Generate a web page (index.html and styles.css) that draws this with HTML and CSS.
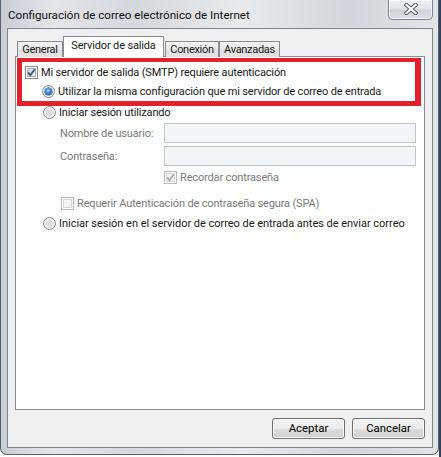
FILE: index.html
```html
<!DOCTYPE html>
<html lang="es">
<head>
<meta charset="utf-8">
<title>Configuración de correo electrónico de Internet</title>
<link rel="stylesheet" href="styles.css">
</head>
<body>
<div class="window">
  <div class="titlebar">
    <span class="title">Configuración de correo electrónico de Internet</span>
    <div class="close">
      <svg width="14" height="12" viewBox="0 0 14 12"><path d="M2.5 2 L11.5 10 M11.5 2 L2.5 10" stroke="#5b6068" stroke-width="4.2" stroke-linecap="square" fill="none"/><path d="M2.5 2 L11.5 10 M11.5 2 L2.5 10" stroke="#ffffff" stroke-width="2.2" stroke-linecap="square" fill="none"/></svg>
    </div>
  </div>
  <div class="client">
    <div class="tabs">
      <div class="tab t-general">General</div>
      <div class="tab t-salida active">Servidor de salida</div>
      <div class="tab t-conexion">Conexión</div>
      <div class="tab t-avanzadas">Avanzadas</div>
    </div>
    <div class="panel">
      <div class="highlight">
        <div class="row hl-1">
          <span class="chk"><span class="chk-in"></span><svg class="tick" width="13" height="13" viewBox="0 0 13 13"><path d="M3.2 6.4 L5.4 9.2 L9.8 3.2" stroke="#3a4f86" stroke-width="1.8" fill="none"/></svg></span>
          <span class="lbl">Mi servidor de salida (SMTP) requiere autenticación</span>
        </div>
        <div class="row hl-2">
          <span class="radio on"><span class="dot"></span></span>
          <span class="lbl">Utilizar la misma configuración que mi servidor de correo de entrada</span>
        </div>
      </div>
      <div class="row r-login">
        <span class="radio"></span>
        <span class="lbl">Iniciar sesión utilizando</span>
      </div>
      <div class="field r-user">
        <span class="flabel">Nombre de usuario:</span>
        <span class="input"></span>
      </div>
      <div class="field r-pass">
        <span class="flabel">Contraseña:</span>
        <span class="input"></span>
      </div>
      <div class="row r-remember">
        <span class="chk disabled"><span class="chk-in"></span><svg class="tick" width="13" height="13" viewBox="0 0 13 13"><path d="M3.2 6.4 L5.4 9.2 L9.8 3.2" stroke="#a9abae" stroke-width="1.8" fill="none"/></svg></span>
        <span class="lbl gray">Recordar contraseña</span>
      </div>
      <div class="row r-spa">
        <span class="chk disabled"><span class="chk-in"></span></span>
        <span class="lbl gray">Requerir Autenticación de contraseña segura (SPA)</span>
      </div>
      <div class="row r-before">
        <span class="radio"></span>
        <span class="lbl wide">Iniciar sesión en el servidor de correo de entrada antes de enviar correo</span>
      </div>
    </div>
    <div class="buttons">
      <button class="btn">Aceptar</button>
      <button class="btn">Cancelar</button>
    </div>
  </div>
</div>
</body>
</html>
```

FILE: styles.css
```css
html, body {
  margin: 0;
  padding: 0;
}
body {
  width: 441px;
  height: 457px;
  overflow: hidden;
  background: linear-gradient(to right, #ffffff 439px, #33435e 439px);
  font-family: "Roboto", "Liberation Sans", sans-serif;
  font-size: 11px;
  letter-spacing: -0.15px;
  color: #1a1a1a;
}
.window {
  box-sizing: border-box;
  width: 439px;
  height: 455px;
  border: 1px solid #56606b;
  border-top: none;
  border-radius: 0 0 7px 7px;
  padding: 0 5px 6px 6px;
  background: linear-gradient(to right, #c9cdd2 0%, #e4e6e9 12%, #d5d8dc 30%, #e9eaec 55%, #d3d6da 80%, #e2e4e7 100%);
}
.titlebar {
  height: 28px;
  display: flex;
  justify-content: space-between;
  align-items: flex-start;
}
.title {
  margin: 7px 0 0 1px;
  line-height: 16px;
  font-size: 11.6px;
  letter-spacing: 0;
  color: #111;
}
.close {
  box-sizing: border-box;
  width: 45px;
  height: 20px;
  border: 1px solid #7c858f;
  border-top: none;
  border-radius: 0 0 5px 5px;
  background: linear-gradient(#f1f2f4 0%, #dfe2e6 48%, #cdd1d6 52%, #dde0e4 100%);
  box-shadow: inset 0 0 0 1px rgba(255,255,255,0.6);
  display: flex;
  align-items: center;
  justify-content: center;
}
.close svg { display: block; margin-top: -1px; }
.client {
  box-sizing: border-box;
  height: 420px;
  border: 1px solid #7d848b;
  background: #f0f0f0;
  padding: 8px 7px 7px 7px;
  display: flex;
  flex-direction: column;
}
.tabs {
  height: 20px;
  display: flex;
  align-items: flex-end;
  padding-left: 2px;
  position: relative;
  z-index: 1;
  margin-bottom: -1px;
}
.tab {
  box-sizing: border-box;
  height: 16px;
  border: 1px solid #898c95;
  border-bottom: none;
  background: linear-gradient(#f3f3f3, #e8e8e8 50%, #dedede 51%, #e4e4e4);
  display: flex;
  align-items: center;
  justify-content: center;
  line-height: 14px;
  white-space: nowrap;
  letter-spacing: -0.3px;
}
.t-general { width: 46px; }
.t-salida { width: 101px; letter-spacing: -0.15px; }
.t-conexion { width: 54px; margin-left: 1px; }
.t-avanzadas { width: 61px; }
.tab.active {
  height: 21px;
  background: #ffffff;
  padding-bottom: 3px;
}
.panel {
  box-sizing: border-box;
  height: 354px;
  border: 1px solid #898c95;
  background: #ffffff;
  padding: 1px 3px 0 1px;
}
.highlight {
  box-sizing: border-box;
  height: 48px;
  border-style: solid;
  border-color: #e3202b;
  border-width: 4px 6px 5px 5px;
  padding: 1px 0 0 3px;
}
.row {
  display: flex;
  align-items: center;
  line-height: 15px;
}
.hl-1 { height: 19px; }
.hl-2 { height: 18px; padding-left: 17px; }
.lbl { margin-left: 3px; white-space: nowrap; }
.lbl.wide { letter-spacing: -0.03px; }
.lbl.gray { color: #7a7a7a; }
.r-login { height: 13px; padding-left: 26px; }
.r-remember { height: 13px; margin-top: 5px; padding-left: 147px; }
.r-spa { height: 13px; margin-top: 13px; padding-left: 44px; }
.r-before { height: 13px; margin-top: 7px; padding-left: 26px; }
.field {
  display: flex;
  align-items: center;
  height: 20px;
  padding-left: 43px;
}
.r-user { margin-top: 4px; }
.r-pass { margin-top: 3px; }
.flabel {
  width: 104px;
  color: #7a7a7a;
  white-space: nowrap;
}
.input {
  box-sizing: border-box;
  width: 252px;
  height: 20px;
  border: 1px solid #c2c7ce;
  background: #f4f5f6;
}
.chk {
  box-sizing: border-box;
  width: 13px;
  height: 13px;
  flex: none;
  border: 1px solid #8e8f8f;
  background: #fff;
  display: grid;
}
.chk > * { grid-area: 1 / 1; }
.chk-in {
  margin: 1px;
  border: 1px solid #b0b4b9;
  background: linear-gradient(135deg, #cdd1d6, #eef0f2 70%, #fafafa);
}
.chk .tick { margin: -1px; display: block; }
.chk.disabled { border-color: #b7b7b7; }
.chk.disabled .chk-in {
  border-color: #d6d6d6;
  background: #f3f3f3;
}
.radio {
  box-sizing: border-box;
  width: 13px;
  height: 13px;
  flex: none;
  border: 1px solid #8a8c8f;
  border-radius: 50%;
  background: radial-gradient(circle at 50% 50%, #d3d6da 0%, #e8eaec 55%, #f7f7f7 100%);
  display: flex;
  align-items: center;
  justify-content: center;
}
.radio .dot {
  width: 7px;
  height: 7px;
  border-radius: 50%;
  background: radial-gradient(circle at 45% 35%, #a9dcff 0%, #3d8ad6 40%, #14489a 100%);
  box-shadow: 0 0 0 0.5px #1e4f8f;
}
.buttons {
  display: flex;
  justify-content: flex-end;
  gap: 7px;
  margin-top: 8px;
}
.btn {
  box-sizing: border-box;
  width: 73px;
  height: 21px;
  border: 1px solid #707070;
  border-radius: 3px;
  background: linear-gradient(#f2f2f2 0%, #ebebeb 50%, #dddddd 51%, #cfcfcf 100%);
  box-shadow: inset 0 0 0 1px #fbfbfb;
  font-family: "Roboto", "Liberation Sans", sans-serif;
  font-size: 11.4px;
  color: #000;
  padding: 0;
  line-height: 17px;
}
```
